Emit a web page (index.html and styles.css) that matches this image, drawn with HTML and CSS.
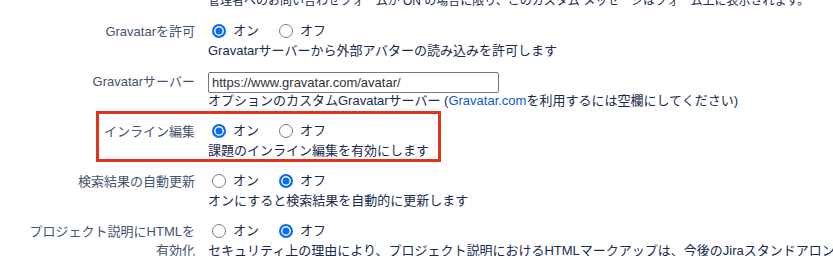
FILE: index.html
```html
<!DOCTYPE html>
<html lang="ja">
<head>
<meta charset="utf-8">
<title>設定</title>
<link rel="stylesheet" href="styles.css">
</head>
<body>
<div class="form">
  <div class="row">
    <div class="label"></div>
    <div class="field">
      <div class="desc small">管理者へのお問い合わせフォームが ON の場合に限り、このカスタム メッセージはフォーム上に表示されます。</div>
    </div>
  </div>

  <div class="row">
    <div class="label">Gravatarを許可</div>
    <div class="field">
      <div class="radios">
        <label class="opt"><input type="radio" name="grav" checked><span>オン</span></label>
        <label class="opt"><input type="radio" name="grav"><span>オフ</span></label>
      </div>
      <div class="desc">Gravatarサーバーから外部アバターの読み込みを許可します</div>
    </div>
  </div>

  <div class="row">
    <div class="label">Gravatarサーバー</div>
    <div class="field">
      <div class="inputline"><input class="text" type="text" value="https://www.gravatar.com/avatar/"></div>
      <div class="desc">オプションのカスタムGravatarサーバー (<a href="#" class="link">Gravatar.com</a>を利用するには空欄にしてください)</div>
    </div>
  </div>

  <div class="row highlight">
    <div class="label">インライン編集</div>
    <div class="field">
      <div class="radios">
        <label class="opt"><input type="radio" name="inline" checked><span>オン</span></label>
        <label class="opt"><input type="radio" name="inline"><span>オフ</span></label>
      </div>
      <div class="desc">課題のインライン編集を有効にします</div>
    </div>
  </div>

  <div class="row">
    <div class="label">検索結果の自動更新</div>
    <div class="field">
      <div class="radios">
        <label class="opt"><input type="radio" name="auto"><span>オン</span></label>
        <label class="opt"><input type="radio" name="auto" checked><span>オフ</span></label>
      </div>
      <div class="desc">オンにすると検索結果を自動的に更新します</div>
    </div>
  </div>

  <div class="row">
    <div class="label">プロジェクト説明にHTMLを有効化</div>
    <div class="field">
      <div class="radios">
        <label class="opt"><input type="radio" name="html"><span>オン</span></label>
        <label class="opt"><input type="radio" name="html" checked><span>オフ</span></label>
      </div>
      <div class="desc">セキュリティ上の理由により、プロジェクト説明におけるHTMLマークアップは、今後のJiraスタンドアロン版ではサポートされなくなります。</div>
    </div>
  </div>
</div>
</body>
</html>
```

FILE: styles.css
```css
html, body {
  margin: 0;
  padding: 0;
  background: #ffffff;
  overflow: hidden;
}

body {
  font-family: "Liberation Sans", "Noto Sans CJK JP", sans-serif;
  font-size: 13px;
  line-height: 20px;
  color: #172b4d;
}

.form {
  margin-top: -10px;
  display: flex;
  flex-direction: column;
  gap: 10px;
}

.row {
  position: relative;
  display: grid;
  grid-template-columns: 170px 1fr;
  column-gap: 13px;
  padding-left: 25px;
}

.label {
  text-align: right;
  color: #44546f;
  line-height: 19px;
  padding-top: 1px;
}

.field {
  min-width: 0;
}

.desc {
  white-space: nowrap;
  color: #172b4d;
}

.desc.small {
  font-size: 12px;
  padding-top: 1px;
}

.link {
  color: #0c5adb;
  text-decoration: none;
}

.radios {
  display: flex;
  align-items: center;
  height: 20px;
  padding-left: 4px;
  gap: 20px;
}

.opt {
  display: flex;
  align-items: center;
  gap: 7px;
  color: #172b4d;
}

.opt input {
  appearance: none;
  -webkit-appearance: none;
  margin: 0;
  width: 14px;
  height: 14px;
  border-radius: 50%;
  border: 1px solid #7d7d7d;
  background: #ffffff;
  box-sizing: border-box;
}

.opt input:checked {
  border: 2px solid #0b6cf0;
  background: #0b6cf0;
  box-shadow: inset 0 0 0 1.5px #ffffff;
}

.inputline {
  height: 20px;
  display: flex;
  align-items: flex-start;
}

.text {
  box-sizing: border-box;
  width: 291px;
  height: 21px;
  margin: 1px 0 0 0;
  padding: 0 3px;
  border: 1px solid #767676;
  border-radius: 2px;
  font-family: "Liberation Sans", "Noto Sans CJK JP", sans-serif;
  font-size: 13px;
  color: #333333;
  background: #ffffff;
  flex: none;
}

.highlight::after {
  content: "";
  position: absolute;
  left: 96px;
  top: -10px;
  width: 345px;
  height: 51px;
  border: 3px solid #e4321b;
  box-sizing: border-box;
  pointer-events: none;
}
```
